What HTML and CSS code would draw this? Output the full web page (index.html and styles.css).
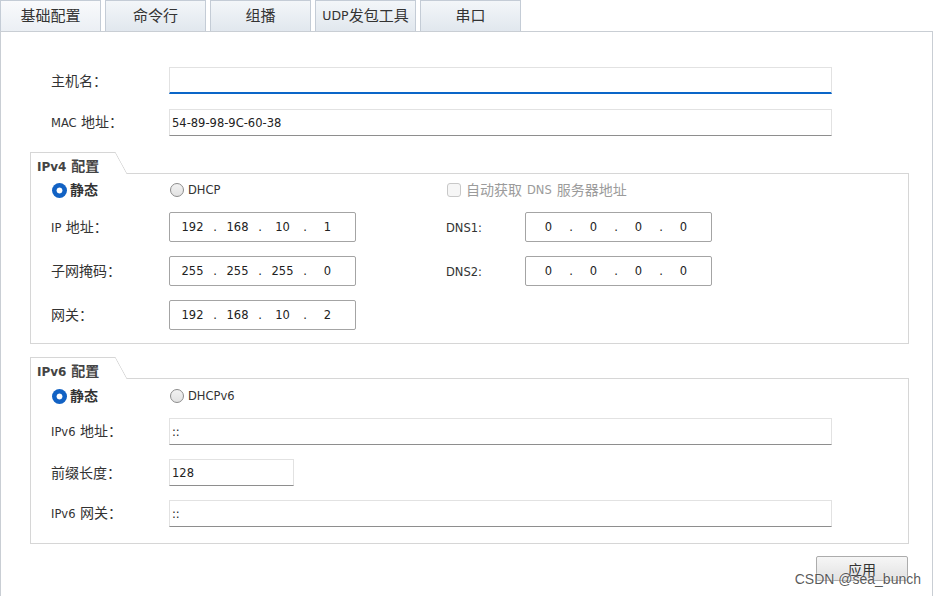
FILE: index.html
```html
<!DOCTYPE html>
<html lang="zh-CN">
<head>
<meta charset="utf-8">
<title>基础配置</title>
<link rel="stylesheet" href="styles.css">
</head>
<body>
<div class="tabs">
  <div class="tab active">基础配置</div>
  <div class="tab">命令行</div>
  <div class="tab">组播</div>
  <div class="tab"><span class="en">UDP</span>发包工具</div>
  <div class="tab">串口</div>
</div>
<div class="panel">
  <div class="form-top">
    <div class="row"><div class="lbl">主机名：</div><div class="field w-full focused"></div></div>
    <div class="row"><div class="lbl"><span class="en">MAC</span> 地址：</div><div class="field w-full">54-89-98-9C-60-38</div></div>
  </div>

  <section class="group">
    <div class="group-head">
      <div class="group-title"><span class="en">IPv4</span> 配置</div>
      <div class="group-slant"></div>
      <div class="group-line"></div>
    </div>
    <div class="group-body v4">
      <div class="opts">
        <div class="opt sel"><span class="radio on"></span>静态</div>
        <div class="opt"><span class="radio"></span><span class="en">DHCP</span></div>
        <div class="opt disabled"><span class="check"></span>自动获取 <span class="en">DNS</span> 服务器地址</div>
      </div>
      <div class="v4-grid">
        <div class="lbl"><span class="en">IP</span> 地址：</div>
        <div class="ip"><span class="seg">192</span><span class="dot">.</span><span class="seg">168</span><span class="dot">.</span><span class="seg">10</span><span class="dot">.</span><span class="seg">1</span></div>
        <div class="lbl c4"><span class="en">DNS1:</span></div>
        <div class="ip"><span class="seg">0</span><span class="dot">.</span><span class="seg">0</span><span class="dot">.</span><span class="seg">0</span><span class="dot">.</span><span class="seg">0</span></div>

        <div class="lbl">子网掩码：</div>
        <div class="ip"><span class="seg">255</span><span class="dot">.</span><span class="seg">255</span><span class="dot">.</span><span class="seg">255</span><span class="dot">.</span><span class="seg">0</span></div>
        <div class="lbl c4"><span class="en">DNS2:</span></div>
        <div class="ip"><span class="seg">0</span><span class="dot">.</span><span class="seg">0</span><span class="dot">.</span><span class="seg">0</span><span class="dot">.</span><span class="seg">0</span></div>

        <div class="lbl">网关：</div>
        <div class="ip"><span class="seg">192</span><span class="dot">.</span><span class="seg">168</span><span class="dot">.</span><span class="seg">10</span><span class="dot">.</span><span class="seg">2</span></div>
      </div>
    </div>
  </section>

  <section class="group">
    <div class="group-head">
      <div class="group-title"><span class="en">IPv6</span> 配置</div>
      <div class="group-slant"></div>
      <div class="group-line"></div>
    </div>
    <div class="group-body v6">
      <div class="opts">
        <div class="opt sel"><span class="radio on"></span>静态</div>
        <div class="opt"><span class="radio"></span><span class="en">DHCPv6</span></div>
      </div>
      <div class="v6-rows">
        <div class="row"><div class="lbl"><span class="en">IPv6</span> 地址：</div><div class="field w-full">::</div></div>
        <div class="row"><div class="lbl">前缀长度：</div><div class="field w-short">128</div></div>
        <div class="row"><div class="lbl"><span class="en">IPv6</span> 网关：</div><div class="field w-full">::</div></div>
      </div>
    </div>
  </section>

  <div class="actions"><button class="btn" type="button">应用</button></div>
</div>
<div class="watermark">CSDN @sea_bunch</div>
</body>
</html>
```

FILE: styles.css
```css
* { box-sizing: border-box; }

html, body {
  margin: 0;
  height: 596px;
  overflow: hidden;
  background: #fff;
}

body {
  position: relative;
  font-family: "DejaVu Sans", "Noto Sans CJK SC", sans-serif;
  font-size: 14px;
  line-height: 18px;
  color: #333;
}

.en { font-size: 11.5px; }

/* tabs */
.tabs {
  display: flex;
  gap: 4px;
  height: 31px;
}

.tab {
  width: 101px;
  height: 31px;
  border: 1px solid #c4ccd6;
  border-bottom: none;
  background: linear-gradient(#f3f6f9, #e1e7ee);
  display: flex;
  align-items: center;
  justify-content: center;
  font-size: 15px;
  color: #333;
}

.tab .en { font-size: 12.5px; }

.tab.active {
  background: linear-gradient(#f9fafc, #ebeff4);
}

/* panel */
.panel {
  width: 933px;
  height: 565px;
  border: 1px solid #c9ced4;
  border-bottom: none;
  padding: 35px 0 0 29px;
}

.form-top {
  padding-left: 21px;
  display: flex;
  flex-direction: column;
  gap: 15px;
}

.row {
  display: flex;
  align-items: center;
}

.lbl {
  width: 118px;
  flex: none;
  white-space: nowrap;
}

.field {
  height: 27px;
  border: 1px solid #e2e2e2;
  border-bottom-color: #8e8e8e;
  padding-left: 2px;
  font-size: 11.5px;
  display: flex;
  align-items: center;
  background: #fff;
  color: #222;
}

.field.w-full { width: 663px; }
.field.w-short { width: 125px; }

.field.focused {
  border-bottom: 2px solid #0a66c8;
}

/* group boxes */
.group {
  width: 879px;
  margin-top: 16px;
}

.group + .group { margin-top: 13px; }

.group-head {
  display: flex;
  height: 22px;
}

.group-title {
  width: 85px;
  border-top: 1px solid #d6d6d6;
  border-left: 1px solid #d6d6d6;
  padding: 4px 0 0 6px;
  font-weight: bold;
  font-size: 14px;
  line-height: 18px;
  color: #444;
  white-space: nowrap;
}

.group-title .en { font-size: 12px; }

.group-slant {
  width: 12px;
  background: linear-gradient(to top right, transparent calc(50% - 0.7px), #d6d6d6 50%, transparent calc(50% + 0.7px));
}

.group-line {
  flex: 1;
  border-bottom: 1px solid #d6d6d6;
}

.group-body {
  border: 1px solid #d6d6d6;
  border-top: none;
}

.group-body.v4 { padding: 7px 0 13px 20px; }
.group-body.v6 { padding: 8px 0 16px 20px; }

.opts {
  display: grid;
  grid-template-columns: 118px 277px 1fr;
  height: 18px;
  align-items: center;
  margin-bottom: 13px;
}

.opt {
  display: flex;
  align-items: center;
  gap: 4px;
  white-space: nowrap;
}

.opt.sel {
  font-weight: bold;
  gap: 3px;
}

.radio {
  flex: none;
  width: 14px;
  height: 14px;
  margin-left: 1px;
  border-radius: 50%;
  border: 1px solid #8c8c8c;
  background: linear-gradient(#f2f2f2, #e2e2e2);
}

.radio.on {
  width: 15px;
  height: 15px;
  border: none;
  background: radial-gradient(circle, #fff 0 2.6px, #1262c4 3.3px);
}

.check {
  flex: none;
  width: 14px;
  height: 14px;
  margin-left: 1px;
  border: 1px solid #c8c8c8;
  border-radius: 3px;
  background: #f6f6f6;
}

.opt.disabled {
  color: #9b9b9b;
  gap: 5px;
}

.v4-grid {
  display: grid;
  grid-template-columns: 118px 187px 90px 79px 187px;
  grid-auto-rows: 30px;
  row-gap: 14px;
  align-items: center;
}

.c4 { grid-column: 4; }

.ip {
  height: 30px;
  border: 1px solid #a4a4a4;
  border-radius: 2px;
  display: flex;
  align-items: center;
  padding-left: 3px;
  font-size: 11.5px;
  color: #222;
}

.ip .seg {
  width: 39px;
  text-align: center;
}

.ip .dot {
  width: 6px;
  text-align: center;
}

.v6-rows {
  display: flex;
  flex-direction: column;
  gap: 14px;
}

/* apply */
.actions {
  width: 879px;
  display: flex;
  justify-content: flex-end;
  margin-top: 12px;
  padding-right: 1px;
}

.btn {
  width: 92px;
  height: 25px;
  padding: 0;
  border: 1px solid #acacac;
  border-radius: 2px;
  background: linear-gradient(#f6f6f6, #e2e2e2);
  font-family: "DejaVu Sans", "Noto Sans CJK SC", sans-serif;
  font-size: 14px;
  color: #333;
}

.watermark {
  position: absolute;
  right: 15px;
  top: 571px;
  font-family: "Liberation Sans", Arial, sans-serif;
  font-size: 14px;
  line-height: 16px;
  color: rgba(60, 60, 60, 0.85);
  text-shadow: 0 0 2px #fff;
}
```
